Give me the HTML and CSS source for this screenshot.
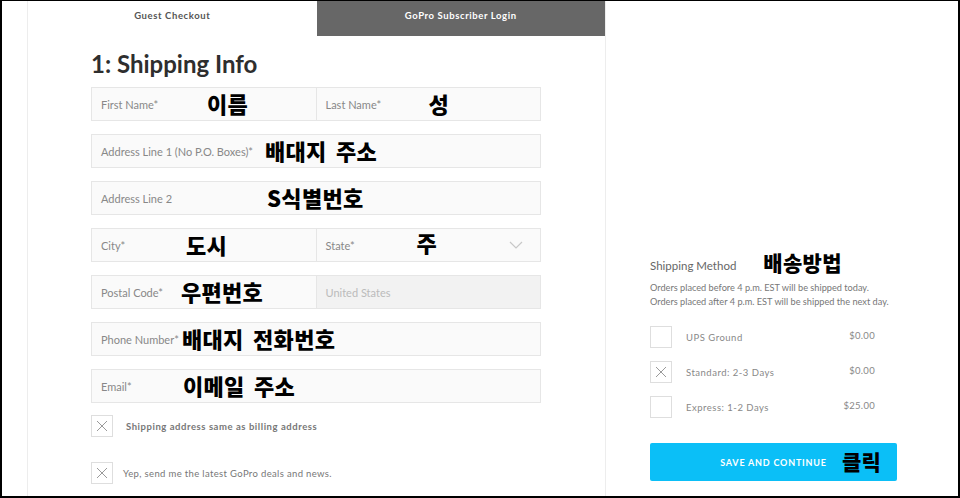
FILE: index.html
```html
<!DOCTYPE html>
<html lang="ko">
<head>
  <meta charset="UTF-8" />
  <meta name="viewport" content="width=device-width, initial-scale=1" />
  <title>GoPro Checkout</title>
  <link rel="stylesheet" href="styles.css">
</head>
<body>

<div class="frame">
  <section class="checkout">
    <nav class="tabs">
      <div class="tab active">Guest Checkout</div>
      <div class="tab">GoPro Subscriber Login</div>
    </nav>

    <div class="form">
      <h2>1: Shipping Info</h2>

      <div class="row">
        <div class="cell"><span class="label">First Name*</span><span class="note n-first">이름</span></div>
        <div class="cell"><span class="label">Last Name*</span><span class="note n-last">성</span></div>
      </div>
      <div class="row">
        <div class="cell"><span class="label">Address Line 1 (No P.O. Boxes)*</span><span class="note n-addr1">배대지 주소</span></div>
      </div>
      <div class="row">
        <div class="cell"><span class="label">Address Line 2</span><span class="note n-addr2">S식별번호</span></div>
      </div>
      <div class="row">
        <div class="cell"><span class="label">City*</span><span class="note n-city">도시</span></div>
        <div class="cell"><span class="label">State*</span><span class="note n-state">주</span>
          <svg class="chevron" width="14" height="8" viewBox="0 0 14 8"><path d="M1 1l6 6 6-6" fill="none" stroke="#c8c8c8" stroke-width="1.2"/></svg>
        </div>
      </div>
      <div class="row">
        <div class="cell"><span class="label">Postal Code*</span><span class="note n-postal">우편번호</span></div>
        <div class="cell disabled"><span class="label">United States</span></div>
      </div>
      <div class="row">
        <div class="cell"><span class="label">Phone Number*</span><span class="note n-phone">배대지 전화번호</span></div>
      </div>
      <div class="row">
        <div class="cell"><span class="label">Email*</span><span class="note n-email">이메일 주소</span></div>
      </div>

      <div class="check same">
        <span class="box"><svg width="12" height="12" viewBox="0 0 12 12"><path d="M1 1l10 10M11 1L1 11" stroke="#9a9a9a" stroke-width="1"/></svg></span>
        <span class="check-text strong">Shipping address same as billing address</span>
      </div>
      <div class="check news">
        <span class="box"><svg width="12" height="12" viewBox="0 0 12 12"><path d="M1 1l10 10M11 1L1 11" stroke="#9a9a9a" stroke-width="1"/></svg></span>
        <span class="check-text">Yep, send me the latest GoPro deals and news.</span>
      </div>
    </div>
  </section>

  <aside class="method">
    <div class="method-title">Shipping Method <span class="note-inline n-method">배송방법</span></div>
    <p class="method-info">Orders placed before 4 p.m. EST will be shipped today.<br>Orders placed after 4 p.m. EST will be shipped the next day.</p>

    <div class="options">
      <div class="option">
        <span class="box"></span>
        <span class="option-name">UPS Ground</span>
        <span class="price">$0.00</span>
      </div>
      <div class="option">
        <span class="box"><svg width="12" height="12" viewBox="0 0 12 12"><path d="M1 1l10 10M11 1L1 11" stroke="#9a9a9a" stroke-width="1"/></svg></span>
        <span class="option-name">Standard: 2-3 Days</span>
        <span class="price">$0.00</span>
      </div>
      <div class="option">
        <span class="box"></span>
        <span class="option-name">Express: 1-2 Days</span>
        <span class="price">$25.00</span>
      </div>
    </div>

    <button class="save">SAVE AND CONTINUE<span class="note n-click">클릭</span></button>
  </aside>
</div>

</body>
</html>
```

FILE: styles.css
```css
body {
  margin: 0;
  background: #fff;
  font-family: 'Lato', 'Noto Sans', sans-serif;
  color: #888;
}

.frame {
  width: 960px;
  height: 498px;
  box-sizing: border-box;
  border: 2px solid #000;
  border-top-width: 1px;
  padding-left: 25px;
  display: flex;
  overflow: hidden;
}

.checkout {
  width: 579px;
  flex: none;
  box-sizing: border-box;
  border-left: 1px solid #ededed;
  border-right: 1px solid #ededed;
}

.tabs {
  display: flex;
  height: 35px;
}

.tab {
  flex: 1;
  display: flex;
  justify-content: center;
  padding-top: 9px;
  box-sizing: border-box;
  font-size: 9.5px;
  font-weight: bold;
  letter-spacing: 0.6px;
  background: #676767;
  color: #fff;
}

.tab.active {
  background: #fff;
  color: #555;
}

.form {
  padding-left: 63px;
}

h2 {
  margin: 13px 0 8px;
  font-size: 24px;
  line-height: 30px;
  font-weight: bold;
  color: #2e2e2e;
}

.row {
  width: 450px;
  height: 34px;
  box-sizing: border-box;
  display: flex;
  margin-bottom: 13px;
  background: #fafafa;
  border: 1px solid #e6e6e6;
}

.cell {
  flex: 1;
  position: relative;
  display: flex;
  align-items: center;
  padding-left: 9px;
  font-size: 11px;
}

.cell + .cell {
  border-left: 1px solid #e6e6e6;
}

.cell.disabled {
  background: #f2f2f2;
  color: #bbb;
}

.chevron {
  position: absolute;
  right: 17px;
  top: 12px;
}

/* 스크린샷 위에 덧붙인 한글 메모 */
.note,
.note-inline {
  font-family: 'Noto Sans CJK KR', sans-serif;
  font-weight: 900;
  font-size: 22px;
  color: #000;
  letter-spacing: 0.3px;
  word-spacing: 3px;
}

.note {
  position: absolute;
  top: 50%;
  transform: translateY(-54%);
  line-height: 1;
}

.n-first { left: 115px; }
.n-last { left: 112px; }
.n-addr1 { left: 173px; }
.n-addr2 { left: 175px; }
.n-city { left: 94px; }
.n-state { left: 100px; top: 44%; }
.n-postal { left: 89px; }
.n-phone { left: 90px; }
.n-email { left: 91px; }

.check {
  display: flex;
  align-items: center;
  font-size: 9.5px;
  letter-spacing: 0.55px;
  color: #777;
}

.check.same {
  margin-top: -1px;
}

.check.news {
  margin-top: 25px;
  letter-spacing: 0.35px;
}

.check-text.strong {
  font-weight: bold;
  margin-left: 13px;
}

.check-text {
  margin-left: 10px;
}

.box {
  width: 22px;
  height: 22px;
  box-sizing: border-box;
  border: 1px solid #dedede;
  background: #fff;
  display: flex;
  align-items: center;
  justify-content: center;
  flex: none;
}

.method {
  margin-left: 44px;
  padding-top: 252px;
  width: 247px;
  flex: none;
}

.method-title {
  display: flex;
  align-items: center;
  height: 24px;
  font-size: 11.5px;
  color: #666;
}

.n-method {
  margin-left: 27px;
  margin-top: -7px;
  font-size: 21px;
}

.method-info {
  margin: 4px 0 0;
  font-size: 9.2px;
  line-height: 14px;
  color: #777;
}

.options {
  margin-top: 17px;
  width: 225px;
}

.option {
  display: flex;
  align-items: center;
  margin-bottom: 13px;
  font-size: 9.5px;
  letter-spacing: 0.5px;
  color: #888;
}

.option:last-child {
  margin-bottom: 0;
  margin-top: 1px;
}

.option-name {
  margin-left: 14px;
  flex: 1;
}

.price {
  margin-top: -4px;
  letter-spacing: 0.3px;
}

.save {
  position: relative;
  margin-top: 25px;
  width: 247px;
  height: 38px;
  border: none;
  border-radius: 2px;
  background: #0bbff7;
  color: #fff;
  font-family: inherit;
  font-size: 9px;
  font-weight: bold;
  letter-spacing: 0.8px;
  padding: 0;
}

.n-click {
  left: 192px;
  font-size: 21px;
}
```
